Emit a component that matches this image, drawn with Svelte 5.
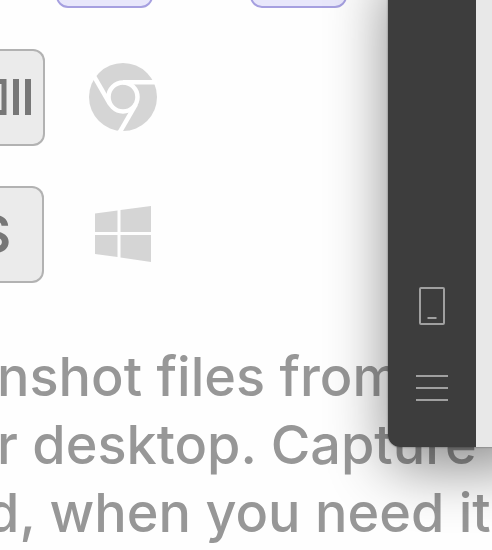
<script>
  const lines = [
    { text: 'nshot files from', cut: 'stem' },
    { text: 'r desktop. Capture', cut: 'stem' },
    { text: 'd, when you need it', cut: 'bowl' }
  ];
</script>

<main>
  <div class="row top">
    <span class="key accent"></span>
    <span class="key accent"></span>
  </div>

  <div class="row">
    <span class="key edge wide">
      <svg width="40" height="36" viewBox="0 0 40 36" role="img" aria-label="Show windows key">
        <path d="M0 2.500H13V33.500H0" fill="none" stroke="#777" stroke-width="5" />
        <path d="M25 0V36M37 0V36" stroke="#777" stroke-width="6" />
      </svg>
    </span>
    <svg class="logo chrome" width="68" height="68" viewBox="-34 -34 68 68" role="img" aria-label="Chrome">
      <circle r="34" fill="#d5d5d5" />
      <circle r="14.5" fill="none" stroke="#fff" stroke-width="4.5" />
      <g stroke="#fff" stroke-width="4.5">
        <path d="M0 -14.8H36" />
        <path d="M0 -14.8H36" transform="rotate(120)" />
        <path d="M0 -14.8H36" transform="rotate(240)" />
      </g>
    </svg>
  </div>

  <div class="row">
    <span class="key edge letter">S</span>
    <svg class="logo" width="56" height="56" viewBox="0 0 56 56" role="img" aria-label="Windows">
      <path
        fill="#d5d5d5"
        d="M0 7.5L22.5 4.5V26H0ZM25.5 4L56 0V26H25.5ZM0 29H22.5V51L0 48ZM25.5 29H56V56L25.5 51.5Z"
      />
    </svg>
  </div>

  <p>
    {#each lines as line}
      <span class={line.cut}>{line.text}</span>
    {/each}
  </p>

  <section class="window" aria-label="Preview window">
    <nav>
      <button aria-label="Device">
        <svg width="28" height="40" viewBox="0 0 28 40" fill="none" stroke="#a0a0a0" stroke-width="2">
          <rect x="2" y="2" width="24" height="36" rx="1" />
          <path d="M9.500 32H18.500" />
        </svg>
      </button>
      <button aria-label="Menu">
        <svg width="32" height="28" viewBox="0 0 32 28" stroke="#a0a0a0" stroke-width="2">
          <path d="M0 2H32M0 14H32M0 26H32" />
        </svg>
      </button>
    </nav>
    <div class="pane"></div>
  </section>
</main>

<style>
  :global(body) {
    margin: 0;
    background: #fefefe;
  }

  main {
    position: relative;
    overflow: hidden;
    min-height: 100vh;
    font-family: Inter, 'Liberation Sans', sans-serif;
  }

  .row {
    display: flex;
    align-items: center;
    height: 96px;
    margin-bottom: 41px;
  }

  .top {
    height: 8px;
    padding-left: 56px;
    gap: 97px;
    align-items: flex-end;
  }

  .key {
    box-sizing: border-box;
    flex: none;
    width: 97px;
    height: 97px;
    border: 2px solid #b2b2b2;
    border-radius: 12px;
    background: #ebebeb;
  }

  .accent {
    border-color: #a6a0e0;
    background: #e8e7fb;
  }

  .edge {
    display: flex;
    align-items: center;
    justify-content: flex-end;
    width: 44px;
    padding-right: 12px;
    border-left: 0;
    border-radius: 0 12px 12px 0;
    color: #777;
    font-size: 52px;
    font-weight: 600;
  }

  .wide {
    width: 45px;
    overflow: hidden;
  }

  .wide svg {
    flex: none;
  }

  .letter {
    padding-right: 31px;
  }

  .logo {
    flex: none;
    margin-left: 51px;
  }

  .chrome {
    margin-left: 44px;
  }

  p {
    margin: 61px 0 0;
    color: #979797;
    font-size: 54px;
    font-weight: 500;
    line-height: 68px;
    white-space: nowrap;
  }

  p span {
    display: block;
  }

  .stem {
    margin-left: -3px;
  }

  .bowl {
    margin-left: -14px;
  }

  .window {
    position: absolute;
    top: -40px;
    left: 388px;
    right: -40px;
    height: 487px;
    display: flex;
    border-radius: 0 0 0 12px;
    box-shadow:
      0 0 2px rgba(0, 0, 0, 0.5),
      0 20px 60px rgba(0, 0, 0, 0.46);
  }

  nav {
    box-sizing: border-box;
    display: flex;
    flex-direction: column;
    align-items: center;
    justify-content: flex-end;
    gap: 48px;
    width: 88px;
    padding-bottom: 45px;
    border-radius: 0 0 0 12px;
    background: #3d3d3d;
  }

  button {
    display: block;
    padding: 0;
    border: 0;
    background: none;
  }

  button svg {
    display: block;
  }

  .pane {
    flex: 1;
    background: #e8e8e8;
  }
</style>
